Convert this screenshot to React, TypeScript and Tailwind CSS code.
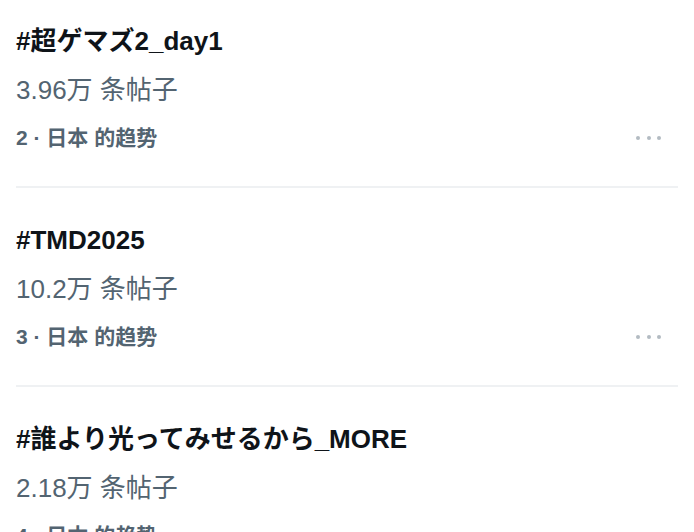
import React from "react";

const items = [
  { title: "#超ゲマズ2_day1", count: "3.96万 条帖子", rank: "2" },
  { title: "#TMD2025", count: "10.2万 条帖子", rank: "3" },
  { title: "#誰より光ってみせるから_MORE", count: "2.18万 条帖子", rank: "4" },
];

function Dots() {
  return (
    <div className="flex items-center gap-[6.5px] pr-[17px]">
      <span className="block w-[4px] h-[4px] rounded-full bg-[#b3bbc2]" />
      <span className="block w-[4px] h-[4px] rounded-full bg-[#b3bbc2]" />
      <span className="block w-[4px] h-[4px] rounded-full bg-[#b3bbc2]" />
    </div>
  );
}

export default function App() {
  return (
    <div
      className="w-[694px] h-[532px] overflow-hidden bg-white px-4 pt-[25px]"
      style={{ fontFamily: '"Liberation Sans", "Noto Sans CJK SC", "Noto Sans CJK JP", sans-serif' }}
    >
      <div className="flex flex-col gap-[36px]">
        {items.map((it) => (
          <div key={it.rank} className="border-b-2 border-[#eff1f3] pb-[34px]">
            <div className="text-[26px] leading-[32px] font-bold text-[#0f1419]">{it.title}</div>
            <div className="mt-[17px] text-[26px] leading-[32px] text-[#536471]">{it.count}</div>
            <div className="mt-[18px] flex items-center justify-between">
              <div className="text-[21px] leading-[28px] font-bold text-[#536471]">
                {it.rank} · 日本 的趋势
              </div>
              <Dots />
            </div>
          </div>
        ))}
      </div>
    </div>
  );
}
